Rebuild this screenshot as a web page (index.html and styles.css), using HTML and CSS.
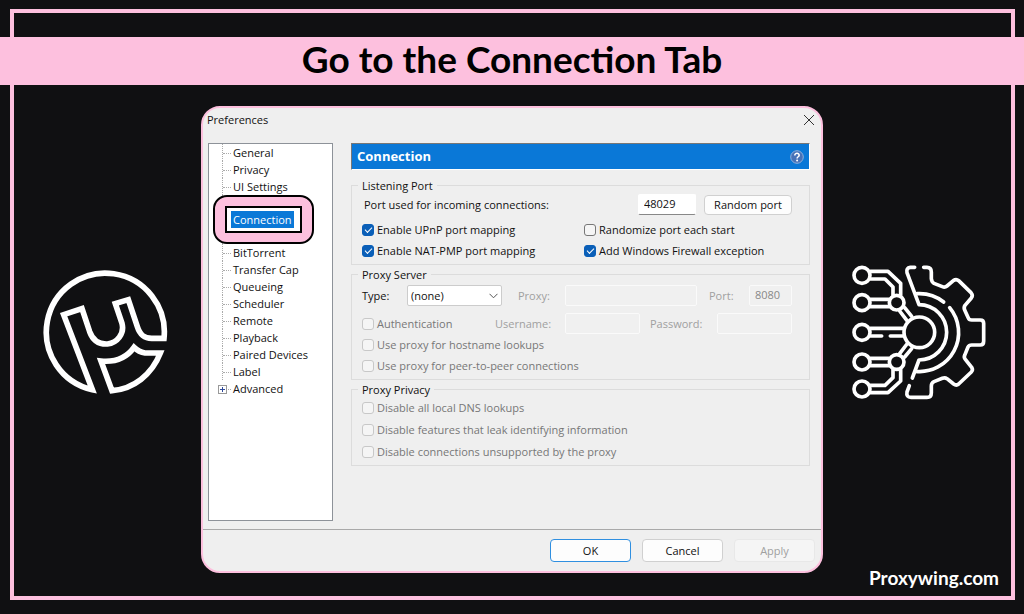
FILE: index.html
```
<!DOCTYPE html>
<html lang="en">
<head>
    <meta charset="utf-8">
    <title>Go to the Connection Tab</title>
    <link rel="stylesheet" href="styles.css">
</head>
<body>
<div class="frame"></div>
<h1 class="banner">Go to the Connection Tab</h1>
<div class="stage">
    <div class="side">
        <svg class="logo" viewBox="36 42 378 378" fill="none" stroke="#fff" stroke-width="17">
            <path d="M402 250A177 177 0 1 0 187 404L101 179L156 161L179 230C190 260 212 268 232 267C262 264 284 236 276 205L256 146L295 134L322 215C330 240 342 250 365 250Z"/>
            <path d="M213 318L246 407C310 402 365 360 391 294H345C330 292 322 287 312 277C290 308 255 322 213 318Z"/>
        </svg>
    </div>

    <div class="dialog">
        <div class="titlebar">
            <span>Preferences</span>
            <button class="close" type="button" aria-label="Close">
                <svg width="12" height="12" viewBox="0 0 12 12" stroke="#333" fill="none"><path d="M1 1L11 11M11 1L1 11"/></svg>
            </button>
        </div>

        <div class="content">
            <ul class="tree">
                <li>General</li>
                <li>Privacy</li>
                <li>UI Settings</li>
                <li></li>
                <li class="current"><div class="ring"><div class="ring-inner"></div></div><span class="selected">Connection</span></li>
                <li></li>
                <li>BitTorrent</li>
                <li>Transfer Cap</li>
                <li>Queueing</li>
                <li>Scheduler</li>
                <li>Remote</li>
                <li>Playback</li>
                <li>Paired Devices</li>
                <li>Label</li>
                <li class="last"><svg class="plus" width="9" height="9" viewBox="0 0 9 9"><rect x=".5" y=".5" width="8" height="8" fill="#fff" stroke="#999"/><path d="M2 4.5H7M4.5 2V7" stroke="#2f4a9a"/></svg>Advanced</li>
            </ul>

            <form class="panel">
                <div class="panel-title">
                    <h2>Connection</h2>
                    <svg width="14" height="14" viewBox="0 0 14 14">
                        <circle cx="7" cy="7" r="6.3" fill="#4772b8" stroke="#8fb0dc"/>
                        <path d="M4.8 5.5C4.8 2.6 9.3 2.7 9.2 5.4C9.1 6.8 7.1 6.8 7.1 8.5" fill="none" stroke="#fff" stroke-width="1.5"/>
                        <circle cx="7.1" cy="10.6" r="1" fill="#fff"/>
                    </svg>
                </div>

                <fieldset>
                    <legend>Listening Port</legend>
                    <div class="row port-row">
                        <label for="port">Port used for incoming connections:</label>
                        <input id="port" class="text port" type="text" value="48029">
                        <button class="btn random" type="button">Random port</button>
                    </div>
                    <div class="checks">
                        <label class="check"><input type="checkbox" checked>Enable UPnP port mapping</label>
                        <label class="check"><input type="checkbox">Randomize port each start</label>
                        <label class="check"><input type="checkbox" checked>Enable NAT-PMP port mapping</label>
                        <label class="check"><input type="checkbox" checked>Add Windows Firewall exception</label>
                    </div>
                </fieldset>

                <fieldset>
                    <legend>Proxy Server</legend>
                    <div class="row type-row">
                        <label class="type" for="type">Type:</label>
                        <div class="select">
                            <select id="type"><option>(none)</option></select>
                            <svg width="9" height="6" viewBox="0 0 9 6" fill="none" stroke="#555"><path d="M.5 .8L4.5 4.8L8.5 .8"/></svg>
                        </div>
                        <label class="off proxy" for="proxy">Proxy:</label>
                        <input id="proxy" class="text grow" type="text" disabled>
                        <label class="off proxy-port" for="pport">Port:</label>
                        <input id="pport" class="text short" type="text" value="8080" disabled>
                    </div>
                    <div class="row auth-row">
                        <label class="check auth"><input type="checkbox" disabled>Authentication</label>
                        <label class="off user" for="user">Username:</label>
                        <input id="user" class="text grow" type="text" disabled>
                        <label class="off pass" for="pass">Password:</label>
                        <input id="pass" class="text grow" type="password" disabled>
                    </div>
                    <label class="check"><input type="checkbox" disabled>Use proxy for hostname lookups</label>
                    <label class="check"><input type="checkbox" disabled>Use proxy for peer-to-peer connections</label>
                </fieldset>

                <fieldset>
                    <legend>Proxy Privacy</legend>
                    <div class="privacy">
                        <label class="check"><input type="checkbox" disabled>Disable all local DNS lookups</label>
                        <label class="check"><input type="checkbox" disabled>Disable features that leak identifying information</label>
                        <label class="check"><input type="checkbox" disabled>Disable connections unsupported by the proxy</label>
                    </div>
                </fieldset>
            </form>
        </div>

        <div class="buttons">
            <button class="btn default" type="button">OK</button>
            <button class="btn" type="button">Cancel</button>
            <button class="btn" type="button" disabled>Apply</button>
        </div>
    </div>

    <div class="side right">
        <svg class="gear" viewBox="34 26 408 408" fill="none" stroke="#fff" stroke-width="11" stroke-linecap="round" stroke-linejoin="round">
            <circle cx="67" cy="60" r="24"/>
            <circle cx="67" cy="142" r="24"/>
            <circle cx="67" cy="231" r="24"/>
            <circle cx="67" cy="320" r="24"/>
            <circle cx="67" cy="401" r="24"/>
            <circle cx="171" cy="142" r="22"/>
            <circle cx="171" cy="320" r="22"/>
            <circle cx="239" cy="231" r="46"/>
            <path d="M92 48H145L183 84V120M92 71H136L160 95V120M92 132H149M92 154H149M92 219H192M92 242H126M152 242H192M92 309H149M92 331H149M92 412H145L183 377V342M92 390H136L160 367V342"/>
            <path d="M195 157L216 183M180 167L202 196M195 305L216 280M180 295L202 266"/>
            <path d="M225 36H212Q199 38 202 52L238 148A83 83 0 0 1 238 314L218 368"/>
            <path d="M232 115A117 117 0 0 1 312 140M330 157A117 117 0 0 1 228 348"/>
            <path d="M252 36H262Q275 36 275 50V70Q276 80 283 84L308 94Q316 97 322 92L342 75Q350 70 357 76L394 112Q401 120 395 128L376 150Q371 158 376 166L386 188Q388 194 396 194H422Q432 194 432 204V258Q432 269 422 269H396Q388 269 385 275L375 300Q372 306 377 312L396 336Q401 344 395 350L357 386Q350 392 342 386L322 370Q316 366 308 369L283 379Q275 383 275 392V412Q275 426 262 426H214Q199 426 202 410L209 391"/>
        </svg>
        <div class="brand">Proxywing.com</div>
    </div>
</div>
</body>
</html>
```
FILE: styles.css
```
* {
    box-sizing: border-box;
}

body {
    margin: 0;
    min-height: 100vh;
    padding-top: 37px;
    background: #101012;
    color: #111;
    font-family: "Open Sans", "Noto Sans", sans-serif;
    font-size: 11px;
    line-height: 15px;
}

/* pink outline behind everything */
.frame {
    position: absolute;
    top: 9px;
    right: 9px;
    bottom: 14px;
    left: 10px;
    border: 4px solid #fdc0de;
}

.banner {
    position: relative;
    margin: 0;
    padding-bottom: 4px;
    background: #fdc0de;
    color: #000;
    font-family: Lato, sans-serif;
    font-size: 37px;
    font-weight: 700;
    line-height: 44px;
    text-align: center;
}

.stage {
    position: relative;
    display: grid;
    grid-template-columns: 1fr 622px 1fr;
    padding-top: 21px;
}

.side {
    padding-top: 163px;
    padding-left: 8px;
    text-align: center;
}

.logo {
    width: 126px;
}

.right {
    display: flex;
    flex-direction: column;
    justify-content: space-between;
    align-items: center;
    padding-top: 158px;
    padding-left: 0;
    margin-right: 10px;
    margin-bottom: -17px;
}

.gear {
    width: 136px;
}

.brand {
    align-self: flex-end;
    margin-right: 15px;
    color: #fff;
    font-family: Lato, sans-serif;
    font-size: 19px;
    font-weight: 700;
    line-height: 24px;
}

.dialog {
    border: 2px solid #fdc0de;
    border-radius: 19px;
    background: #efefef;
}

.titlebar {
    display: flex;
    justify-content: space-between;
    align-items: center;
    height: 35px;
    padding: 0 6px 12px 4px;
}

.close {
    display: flex;
    padding: 0;
    border: 0;
    background: none;
}

.content {
    display: flex;
    gap: 18px;
    padding: 0 11px 8px 5px;
    border-bottom: 1px solid #a9a9a9;
}

/* category tree */
.tree {
    width: 125px;
    height: 378px;
    margin: 0;
    padding: 0 0 0 13px;
    border: 1px solid #8d9299;
    background: #fff;
    list-style: none;
}

.tree li {
    position: relative;
    height: 17px;
    padding-left: 10px;
    line-height: 17px;
    border-left: 1px dotted #aaa;
}

.tree li:empty {
    height: 16px;
}

.tree li::before {
    content: "";
    position: absolute;
    top: 9px;
    left: 0;
    width: 8px;
    border-top: 1px dotted #aaa;
}

.tree .last {
    border-left-color: transparent;
}

.plus {
    position: absolute;
    top: 5px;
    left: -5px;
}

.tree .current {
    z-index: 1;
    padding-left: 8px;
}

.ring {
    position: absolute;
    top: -16px;
    left: -10px;
    width: 101px;
    height: 49px;
    padding: 9px 10px;
    border: 2px solid #000;
    border-radius: 14px;
    background: #fdc0de;
}

.ring-inner {
    height: 27px;
    border: 2px solid #000;
    background: #fff;
}

.selected {
    position: relative;
    display: inline-block;
    padding: 0 2px;
    background: #0a78d7;
    color: #fff;
}

/* settings panel */
.panel {
    flex: 1;
    min-width: 0;
}

.panel-title {
    display: flex;
    justify-content: space-between;
    align-items: center;
    height: 27px;
    margin-bottom: 8px;
    padding: 0 5px;
    border: 1px solid;
    border-color: #777 #fff #fff #777;
    background: #0a78d7;
}

.panel-title h2 {
    margin: 0;
    color: #fff;
    font-size: 13px;
    font-weight: 700;
}

fieldset {
    min-width: 0;
    margin: 0 0 2px;
    padding: 0 17px 3px 10px;
    border: 1px solid #dcdcdc;
}

legend {
    margin-left: -4px;
    padding: 0 4px;
    line-height: 15px;
}

.row {
    display: flex;
    align-items: center;
    height: 21px;
}

.port-row {
    margin: 1px 0 4px;
    padding-left: 2px;
}

.checks {
    display: grid;
    grid-template-columns: 222px 1fr;
}

.check {
    display: flex;
    align-items: center;
    gap: 3px;
    height: 21px;
    white-space: nowrap;
}

.check input {
    appearance: none;
    position: relative;
    width: 12px;
    height: 12px;
    margin: 0;
    border: 1px solid #777;
    border-radius: 3px;
    background: #f5f5f5;
}

.check input:checked {
    border-color: #0a5fb8;
    background: #0a5fb8;
}

.check input:checked::after {
    content: "";
    position: absolute;
    top: 2px;
    left: 2px;
    width: 6px;
    height: 3px;
    border: solid #fff;
    border-width: 0 0 1px 1px;
    transform: rotate(-45deg);
}

.check input:disabled {
    border-color: #c8c8c8;
}

.check:has(input:disabled) {
    color: #777;
}

.text {
    min-width: 0;
    height: 21px;
    padding: 0 5px 2px;
    border: 1px solid #fff;
    border-bottom-color: #888;
    border-radius: 2px;
    background: #fff;
    color: #111;
    font: inherit;
}

.text:disabled {
    border-color: #fafafa;
    background: #f0f0f0;
    color: #888;
}

.port {
    width: 58px;
    margin-left: auto;
    margin-right: 8px;
}

.btn {
    width: 81px;
    height: 23px;
    padding: 0;
    border: 1px solid #d0d0d0;
    border-radius: 4px;
    background: #fdfdfd;
    color: #111;
    font: inherit;
}

.random {
    width: 88px;
    height: 20px;
}

.default {
    border-color: #2f8fe0;
}

.btn:disabled {
    border-color: #e8e8e8;
    background: #f5f5f5;
    color: #a0a0a0;
}

.type-row {
    margin: 3px 0 7px;
}

.type {
    width: 45px;
}

.select {
    position: relative;
    width: 95px;
}

.select select {
    appearance: none;
    display: block;
    width: 100%;
    height: 21px;
    padding: 0 3px;
    border: 1px solid #ccc;
    border-radius: 2px;
    background: #fff;
    color: #111;
    font: inherit;
}

.select svg {
    position: absolute;
    top: 8px;
    right: 4px;
}

.off {
    color: #a0a0a0;
}

.proxy {
    width: 47px;
    margin-left: 16px;
}

.proxy-port {
    width: 40px;
    margin-left: 12px;
}

.short {
    width: 43px;
}

.grow {
    flex: 1;
}

.auth {
    width: 133px;
}

.user {
    width: 70px;
}

.pass {
    width: 67px;
    margin-left: 10px;
}

.privacy {
    display: grid;
    gap: 1px;
}

.buttons {
    display: flex;
    justify-content: flex-end;
    gap: 11px;
    padding: 9px 6px;
}
```
